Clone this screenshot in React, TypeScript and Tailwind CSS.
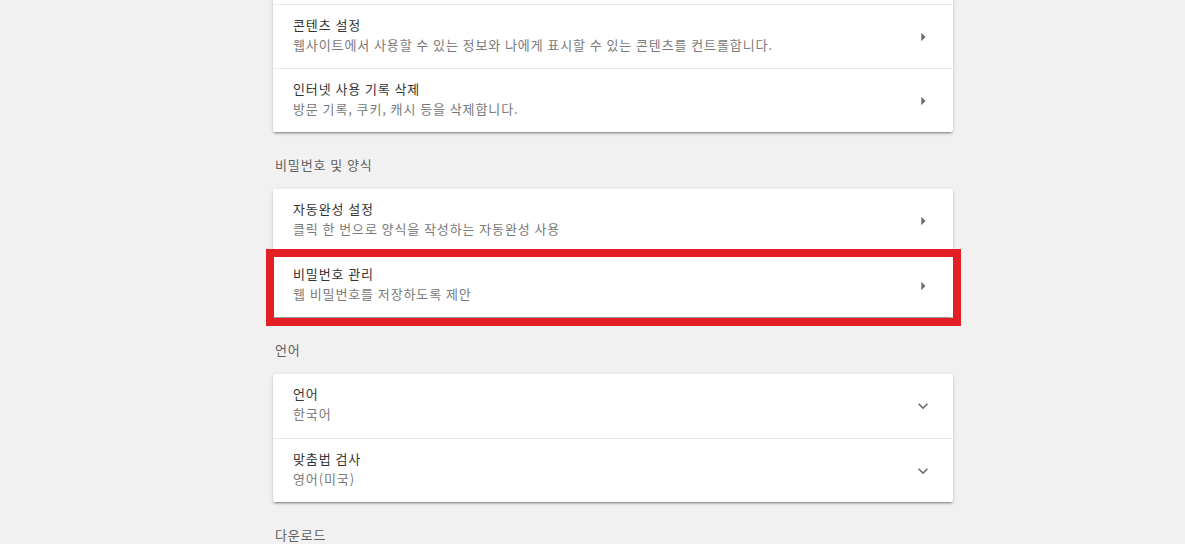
import type { ReactNode } from 'react';

const font = { fontFamily: '"Noto Sans CJK KR", "Noto Sans", sans-serif' };

function ArrowRight() {
  return (
    <svg width="20" height="20" viewBox="0 0 24 24" fill="#6e6e6e">
      <path d="M10 17l5-5-5-5v10z" />
    </svg>
  );
}

function ExpandMore() {
  return (
    <svg width="20" height="20" viewBox="0 0 24 24" fill="#6e6e6e">
      <path d="M16.59 8.59L12 13.17 7.41 8.59 6 10l6 6 6-6z" />
    </svg>
  );
}

interface RowProps {
  title: string;
  sub: string;
  icon: 'arrow' | 'expand';
  first?: boolean;
  highlight?: boolean;
}

function Row({ title, sub, icon, first, highlight }: RowProps) {
  return (
    <div className={`relative flex h-[64px] items-center pl-5 pr-[18px] ${first ? '' : 'border-t border-[#e8e8e8]'}`}>
      <div className="flex flex-1 flex-col pb-[4px] tracking-[0.9px]">
        <div className="text-[13px] leading-[20px] text-[#333333]">{title}</div>
        <div className="text-[13px] leading-[20px] text-[#7a7a7a]">{sub}</div>
      </div>
      <div className="flex h-6 w-6 items-center justify-center">
        {icon === 'arrow' ? <ArrowRight /> : <ExpandMore />}
      </div>
      {highlight && (
        <div className="pointer-events-none absolute left-[-7px] top-[-5px] h-[77px] w-[695px] border-[8px] border-[#e31e25]" />
      )}
    </div>
  );
}

function Card({ children, className = '' }: { children: ReactNode; className?: string }) {
  return (
    <div
      className={`rounded-[2px] bg-white shadow-[0_2px_2px_0_rgba(0,0,0,0.14),0_1px_5px_0_rgba(0,0,0,0.12),0_3px_1px_-2px_rgba(0,0,0,0.2)] ${className}`}
    >
      {children}
    </div>
  );
}

function Label({ children }: { children: ReactNode }) {
  return (
    <div className="mb-[14px] mt-[23px] pl-[2px] text-[13px] leading-[20px] tracking-[0.9px] text-[#5f5f5f]">
      {children}
    </div>
  );
}

export default function App() {
  return (
    <div className="h-[544px] w-full overflow-hidden bg-[#f1f1f1]" style={font}>
      <div className="ml-[273px] w-[680px]">
        <Card className="-mt-[60px]">
          <div className="h-[64px]" />
          <Row
            title="콘텐츠 설정"
            sub="웹사이트에서 사용할 수 있는 정보와 나에게 표시할 수 있는 콘텐츠를 컨트롤합니다."
            icon="arrow"
          />
          <Row title="인터넷 사용 기록 삭제" sub="방문 기록, 쿠키, 캐시 등을 삭제합니다." icon="arrow" />
        </Card>

        <Label>비밀번호 및 양식</Label>
        <Card>
          <Row title="자동완성 설정" sub="클릭 한 번으로 양식을 작성하는 자동완성 사용" icon="arrow" first />
          <Row title="비밀번호 관리" sub="웹 비밀번호를 저장하도록 제안" icon="arrow" highlight />
        </Card>

        <Label>언어</Label>
        <Card>
          <Row title="언어" sub="한국어" icon="expand" first />
          <Row title="맞춤법 검사" sub="영어(미국)" icon="expand" />
        </Card>

        <Label>다운로드</Label>
      </div>
    </div>
  );
}
